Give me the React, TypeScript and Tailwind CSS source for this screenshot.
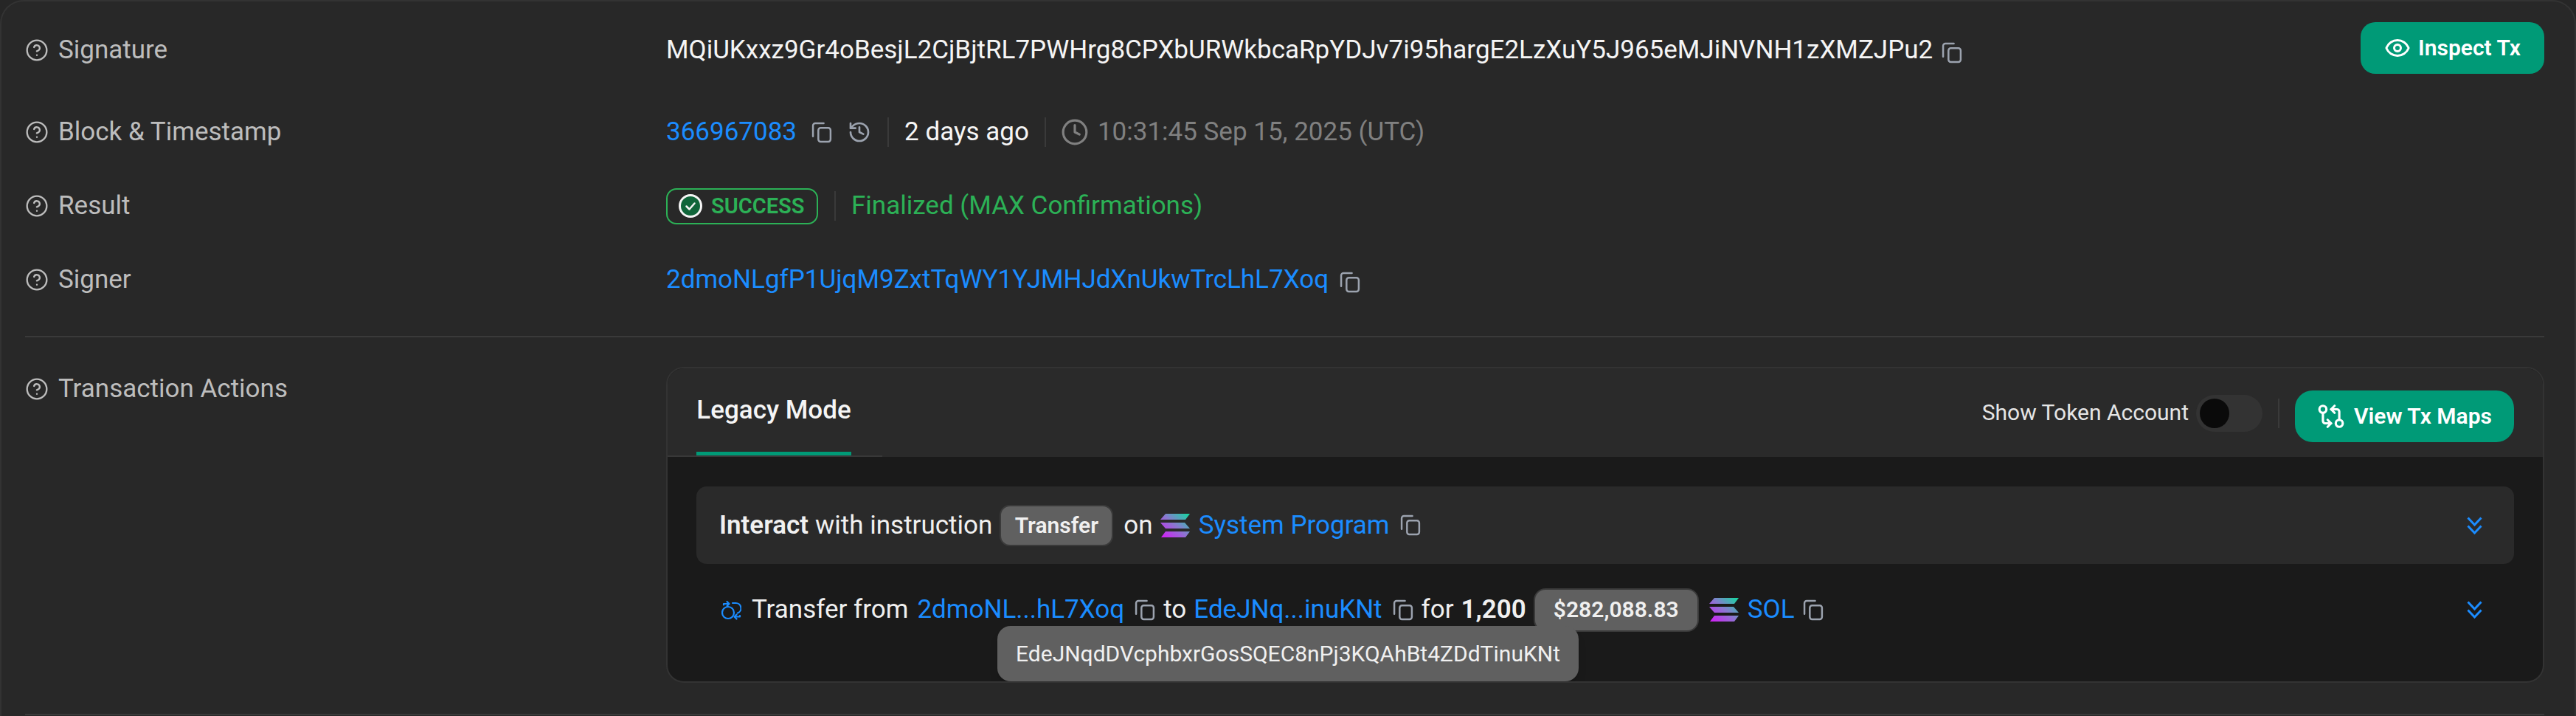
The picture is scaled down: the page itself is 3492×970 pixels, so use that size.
import { CircleHelp, Clock, Eye, GitCompareArrows, History } from 'lucide-react';

function CopyIcon({ className = '' }: { className?: string }) {
  return (
    <svg viewBox="0 0 28 28" fill="none" stroke="#9ca3af" strokeWidth="2.4" strokeLinecap="round" className={`h-[29px] w-[29px] shrink-0 ${className}`}>
      <path d="M2 19V5a3 3 0 0 1 3-3h11" />
      <rect x="9" y="8" width="16" height="18" rx="3" />
    </svg>
  );
}

function SolanaLogo({ id }: { id: string }) {
  return (
    <svg viewBox="0 0 40 32" className="h-8 w-10 shrink-0">
      <defs>
        <linearGradient id={id} x1="36" y1="-2" x2="6" y2="34" gradientUnits="userSpaceOnUse">
          <stop offset="0" stopColor="#14d9a0" />
          <stop offset="0.5" stopColor="#8a78d0" />
          <stop offset="1" stopColor="#d020f5" />
        </linearGradient>
      </defs>
      <path d="M7 0h33l-6 8H0z" fill={`url(#${id})`} />
      <path d="M0 12h33l7 8H7z" fill={`url(#${id})`} />
      <path d="M7 24h33l-6 8H1z" fill={`url(#${id})`} />
    </svg>
  );
}

function TransferIcon() {
  return (
    <svg viewBox="0 0 27 27" fill="none" stroke="#1b8cff" strokeWidth="2.2" strokeLinecap="round" strokeLinejoin="round" className="h-[27px] w-[27px] shrink-0">
      <circle cx="9" cy="17" r="8" />
      <path d="M15 4h4a7 7 0 0 1 3 13.500" />
      <path d="M3 6.500V5h7M7.500 2l3 3-3 3" />
      <path d="M25 21v1.500h-7M20.500 19.500l-3 3 3 3" />
    </svg>
  );
}

function DoubleChevron({ className = '' }: { className?: string }) {
  return (
    <svg viewBox="0 0 21 24" fill="none" stroke="#1b8cff" strokeWidth="3" strokeLinejoin="miter" className={`h-6 w-[21px] shrink-0 ${className}`}>
      <path d="M1.500 1.500l9 9.500 9-9.500" />
      <path d="M1.500 12.500l9 9.500 9-9.500" />
    </svg>
  );
}

function Label({ text }: { text: string }) {
  return (
    <div className="flex h-12 w-[869px] shrink-0 items-center gap-[13px] text-[#bdbdbd]">
      <CircleHelp className="h-8 w-8 shrink-0" strokeWidth={1.75} />
      <span>{text}</span>
    </div>
  );
}

function Sep({ className = '' }: { className?: string }) {
  return <div className={`h-10 w-0.5 shrink-0 bg-[#3a3a3a] ${className}`} />;
}

export default function App() {
  return (
    <div className="h-[970px] w-[3492px] overflow-hidden bg-[#262626] font-['Roboto',sans-serif] text-[35px] leading-[48px]">
      <div className="h-[970px] rounded-t-[32px] border-2 border-b-0 border-[#333333] bg-[#282828] pl-8 pr-[41px] pt-[42px]">
        <div className="mb-[63px] flex h-12 items-center">
          <Label text="Signature" />
          <span className="text-[#f5f5f5]">MQiUKxxz9Gr4oBesjL2CjBjtRL7PWHrg8CPXbURWkbcaRpYDJv7i95hargE2LzXuY5J965eMJiNVNH1zXMZJPu2</span>
          <CopyIcon className="ml-3 translate-y-[3px]" />
          <button className="ml-auto flex h-[70px] w-[249px] -translate-y-[3px] items-center justify-center gap-2.5 rounded-[20px] bg-[#009a77] text-[30px] font-semibold text-white">
            <Eye className="h-9 w-9" strokeWidth={2} />
            Inspect Tx
          </button>
        </div>

        <div className="mb-[52px] flex h-12 items-center">
          <Label text="Block & Timestamp" />
          <span className="text-[#1b8cff]">366967083</span>
          <CopyIcon className="ml-[20px]" />
          <History className="ml-[20px] h-8 w-8 shrink-0 text-[#9ca3af]" strokeWidth={2} />
          <Sep className="ml-[22px]" />
          <span className="ml-[21px] text-[#f5f5f5]">2 days ago</span>
          <Sep className="ml-[21px]" />
          <Clock className="ml-5 h-[38px] w-[38px] shrink-0 text-[#808080]" strokeWidth={2} />
          <span className="ml-3 text-[#808080]">10:31:45 Sep 15, 2025 (UTC)</span>
        </div>

        <div className="mb-[52px] flex h-12 items-center">
          <Label text="Result" />
          <div className="flex h-[49px] w-[206px] items-center gap-3 rounded-[14px] border-2 border-[#2cb156] pl-[15px]">
            <svg viewBox="0 0 32 32" className="h-8 w-8 shrink-0">
              <circle cx="16" cy="16" r="14.500" fill="#10653a" stroke="#f5f5f5" strokeWidth="3" />
              <path d="M10.500 16.500l4 4 7-8" fill="none" stroke="#f5f5f5" strokeWidth="2.500" strokeLinecap="round" strokeLinejoin="round" />
            </svg>
            <span className="text-[29px] font-semibold text-[#2cb156]">SUCCESS</span>
          </div>
          <Sep className="ml-[22px]" />
          <span className="ml-[21px] text-[#2cb156]">Finalized (MAX Confirmations)</span>
        </div>

        <div className="mb-[52px] flex h-12 items-center">
          <Label text="Signer" />
          <span className="text-[#1b8cff]">2dmoNLgfP1UjqM9ZxtTqWY1YJMHJdXnUkwTrcLhL7Xoq</span>
          <CopyIcon className="ml-[15px] translate-y-[3px]" />
        </div>

        <div className="h-0.5 bg-[#3a3a3a]" />

        <div className="mt-10 flex items-start">
          <div className="mt-1.5">
            <Label text="Transaction Actions" />
          </div>
          <div className="h-[428px] flex-1 overflow-hidden rounded-[24px] border-2 border-[#333333] bg-[#1a1a1a]">
            <div className="flex h-[120px] items-start bg-[#2a2a2a]">
              <div className="flex h-[120px] w-[291px] flex-col border-b-2 border-[#383838] pl-[39px]">
                <div className="flex w-[210px] flex-1 flex-col items-center justify-between">
                  <span className="mt-[33px] font-medium text-[#f5f5f5]">Legacy Mode</span>
                  <div className="h-[5px] w-full bg-[#009a77]" />
                </div>
              </div>
              <div className="ml-auto mr-[39px] mt-[30px] flex items-center">
                <span className="mr-2.5 -translate-y-[5px] text-[30px] text-[#e5e5e5]">Show Token Account</span>
                <div className="flex h-[50px] w-[90px] -translate-y-[4px] items-center rounded-full bg-[#333333] pl-[5px]">
                  <div className="h-10 w-10 rounded-full bg-[#0a0a0a]" />
                </div>
                <Sep className="ml-[21px] -translate-y-[4px]" />
                <button className="ml-[21px] flex h-[70px] w-[297px] items-center justify-center gap-3 rounded-[24px] bg-[#009a77] text-[30px] font-semibold text-white">
                  <GitCompareArrows className="h-[38px] w-[38px]" strokeWidth={2} />
                  View Tx Maps
                </button>
              </div>
            </div>

            <div className="px-[39px] pt-10 text-[#f0f0f0]">
              <div className="flex h-[105px] items-center rounded-[14px] bg-[#2a2a2a] pl-[31px] pr-[43px]">
                <span className="font-semibold">Interact</span>
                <span className="ml-[9px]">with instruction</span>
                <span className="ml-2.5 flex h-14 w-[154px] items-center justify-center rounded-[14px] border-2 border-[#3a3a3a] bg-[#606060] text-[30px] font-semibold">Transfer</span>
                <span className="ml-3.5">on</span>
                <span className="ml-2.5"><SolanaLogo id="sol-a" /></span>
                <span className="ml-3 text-[#1b8cff]">System Program</span>
                <CopyIcon className="ml-3.5" />
                <DoubleChevron className="ml-auto" />
              </div>

              <div className="relative mt-8 flex h-[60px] items-center pl-[34px] pr-[43px]">
                <TransferIcon />
                <span className="ml-[14px]">Transfer from</span>
                <span className="ml-3 text-[#1b8cff]">2dmoNL...hL7Xoq</span>
                <CopyIcon className="ml-3.5" />
                <span className="ml-2.5">to</span>
                <span className="ml-2.5 text-[#1b8cff]">EdeJNq...inuKNt</span>
                <CopyIcon className="ml-3.5" />
                <span className="ml-2.5">for</span>
                <span className="ml-2.5 font-semibold">1,200</span>
                <span className="ml-2.5 flex h-[59px] w-[224px] items-center justify-center rounded-[16px] border-2 border-[#3a3a3a] bg-[#606060] text-[30px] font-semibold">$282,088.83</span>
                <span className="ml-3.5"><SolanaLogo id="sol-b" /></span>
                <span className="ml-3 text-[#1b8cff]">SOL</span>
                <CopyIcon className="ml-3" />
                <DoubleChevron className="ml-auto" />
                <div className="absolute left-[408px] top-[52px] flex h-[75px] w-[788px] items-center justify-center rounded-[18px] bg-[#606060] text-[30px] text-[#f0f0f0] shadow-lg">
                  EdeJNqdDVcphbxrGosSQEC8nPj3KQAhBt4ZDdTinuKNt
                </div>
              </div>
            </div>
          </div>
        </div>

        <div className="mt-[42px] h-0.5 bg-[#3a3a3a]" />
      </div>
    </div>
  );
}
